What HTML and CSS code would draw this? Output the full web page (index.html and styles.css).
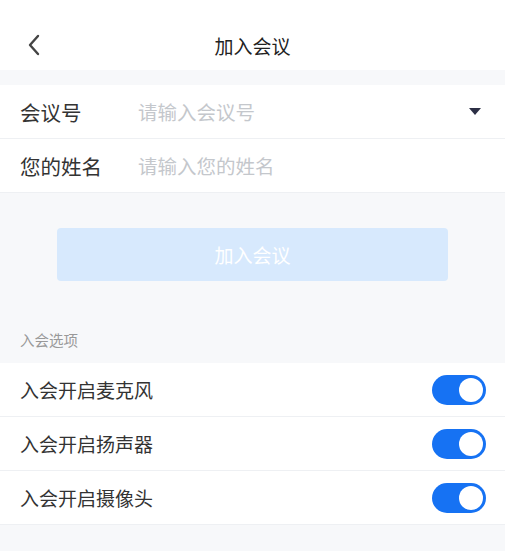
FILE: index.html
```html
<!DOCTYPE html>
<html lang="zh-CN">

<head>
    <meta charset="UTF-8">
    <title>加入会议</title>
    <link rel="stylesheet" href="styles.css">
</head>

<body>
    <div class="page">
        <div class="header">
            <span class="back">
                <svg width="14" height="22" viewBox="0 0 14 22">
                    <path d="M11 2 L3 11 L11 20" fill="none" stroke="#444" stroke-width="2.4" stroke-linecap="round" stroke-linejoin="round" />
                </svg>
            </span>
            <span class="title">加入会议</span>
            <span></span>
        </div>

        <div class="form">
            <div class="row">
                <span class="label">会议号</span>
                <input class="field" type="text" placeholder="请输入会议号">
                <span class="arrow"></span>
            </div>
            <div class="row">
                <span class="label">您的姓名</span>
                <input class="field" type="text" placeholder="请输入您的姓名">
            </div>
        </div>

        <div class="actions">
            <button class="join" disabled>加入会议</button>
        </div>

        <div class="section">入会选项</div>

        <ul class="options">
            <li>
                <span>入会开启麦克风</span>
                <span class="switch on"><i></i></span>
            </li>
            <li>
                <span>入会开启扬声器</span>
                <span class="switch on"><i></i></span>
            </li>
            <li>
                <span>入会开启摄像头</span>
                <span class="switch on"><i></i></span>
            </li>
        </ul>
    </div>
</body>

</html>
```

FILE: styles.css
```css
* {
    margin: 0;
    padding: 0;
    box-sizing: border-box;
}

html,
body {
    height: 100%;
}

body {
    background: #f7f8fa;
    font-family: "Noto Sans CJK SC", "Noto Sans", sans-serif;
    color: #333;
}

ul {
    list-style: none;
}

.header {
    height: 70px;
    padding-top: 20px;
    background: #fff;
    display: grid;
    grid-template-columns: 1fr auto 1fr;
    align-items: center;
}

.back {
    padding-left: 27px;
    display: flex;
    align-items: center;
}

.title {
    font-size: 19px;
    color: #222;
}

.form {
    margin-top: 15px;
    background: #fff;
}

.row {
    height: 54px;
    padding: 0 24px 0 20px;
    display: flex;
    align-items: center;
    border-bottom: 1px solid #eef0f3;
}

.row .label {
    width: 118px;
    font-size: 20.5px;
    color: #333;
}

.row .field {
    flex: 1;
    border: none;
    outline: none;
    background: transparent;
    font-family: inherit;
    font-size: 19.5px;
    color: #333;
}

.row .field::placeholder {
    color: #c4c7cc;
}

.arrow {
    width: 0;
    height: 0;
    border-left: 6px solid transparent;
    border-right: 6px solid transparent;
    border-top: 7px solid #2c2f45;
}

.actions {
    padding: 35px 57px 0;
}

.join {
    width: 100%;
    height: 53px;
    border: none;
    border-radius: 4px;
    background: #d7e9fd;
    color: #fff;
    font-family: inherit;
    font-size: 19px;
}

.section {
    padding: 47px 20px 11px;
    line-height: 24px;
    font-size: 14.5px;
    color: #999;
}

.options {
    background: #fff;
}

.options li {
    height: 54px;
    padding: 0 19px 0 20px;
    display: flex;
    align-items: center;
    justify-content: space-between;
    border-bottom: 1px solid #eef0f3;
    font-size: 19px;
    color: #333;
}

.switch {
    width: 54px;
    height: 30px;
    border-radius: 15px;
    background: #dcdfe6;
    position: relative;
}

.switch.on {
    background: #1672f3;
}

.switch i {
    position: absolute;
    top: 3px;
    left: 3px;
    width: 24px;
    height: 24px;
    border-radius: 50%;
    background: #fff;
}

.switch.on i {
    left: 27px;
}
```
